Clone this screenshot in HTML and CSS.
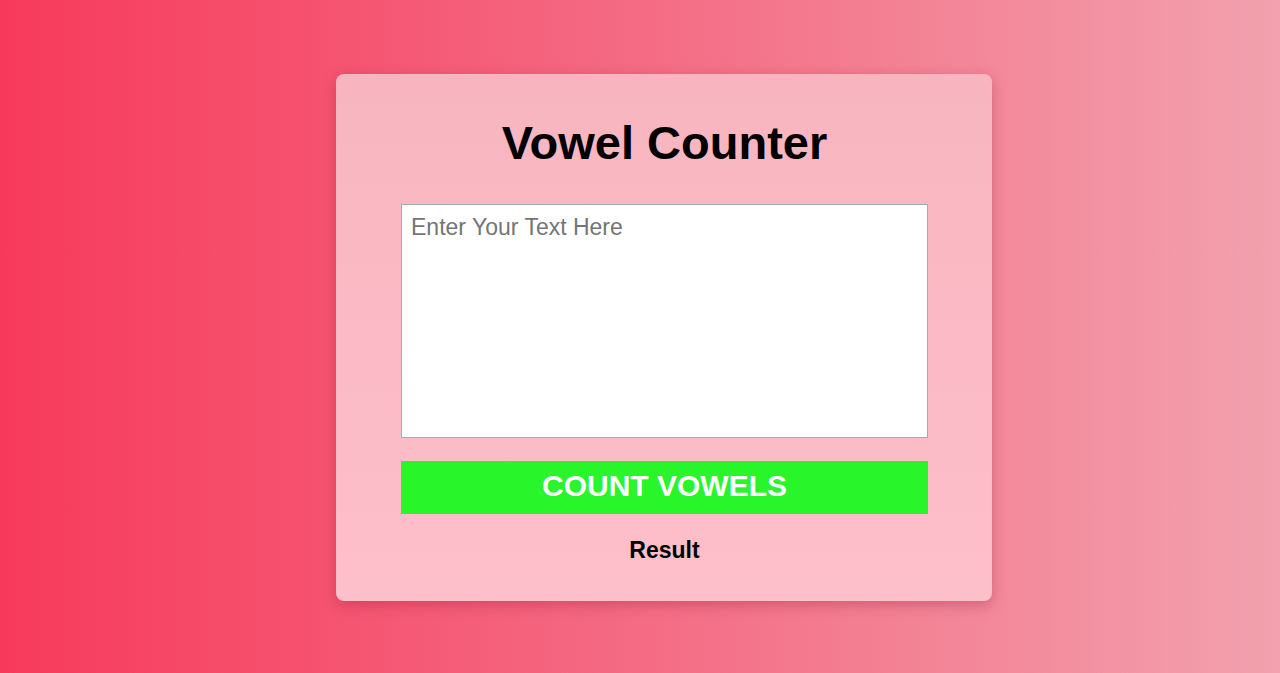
FILE: index.html
```html
<!DOCTYPE html>
<html lang="en">
<head>
<meta charset="UTF-8">
<title>Vowel Counter</title>
<link rel="stylesheet" href="styles.css">
</head>
<body>
<main class="page">
  <section class="card">
    <h1 class="title">Vowel Counter</h1>
    <textarea class="input" placeholder="Enter Your Text Here"></textarea>
    <button class="btn" type="button">COUNT VOWELS</button>
    <p class="result">Result</p>
  </section>
</main>
</body>
</html>
```
FILE: styles.css
```css
* { box-sizing: border-box; }
html, body { margin: 0; height: 100%; }
body {
  font-family: "Liberation Sans", Arial, sans-serif;
  background: linear-gradient(to right, #f73a5c 0%, #f4667f 45%, #f2a1ae 100%);
}
.page {
  height: 673px;
  display: flex;
  justify-content: center;
  padding-top: 74px;
}
.card {
  width: 656px;
  height: 527px;
  margin-left: 48px;
  background: linear-gradient(to bottom, #f8b5bf, #fdbfca);
  border-radius: 8px;
  box-shadow: 0 4px 14px rgba(150, 30, 60, 0.35);
  padding: 0 64px 0 65px;
  display: flex;
  flex-direction: column;
  align-items: stretch;
}
.title {
  margin: 44px 0 0;
  text-align: center;
  font-size: 47px;
  font-weight: bold;
  line-height: 50px;
  color: #000;
}
.input {
  margin-top: 36px;
  width: 527px;
  height: 234px;
  border: 1px solid #a9a9a9;
  background: #fff;
  padding: 9px 9px;
  font-family: "Liberation Sans", Arial, sans-serif;
  font-size: 23px;
  resize: none;
  outline: none;
}
.input::placeholder { color: #757575; }
.btn {
  margin-top: 23px;
  width: 527px;
  height: 53px;
  border: none;
  padding: 0 0 3px;
  background: #28f52a;
  color: #fff;
  font-family: "Liberation Sans", Arial, sans-serif;
  font-size: 30px;
  font-weight: bold;
  cursor: pointer;
}
.result {
  margin: 23px 0 0;
  text-align: center;
  font-size: 23px;
  font-weight: bold;
  color: #000;
}
```
